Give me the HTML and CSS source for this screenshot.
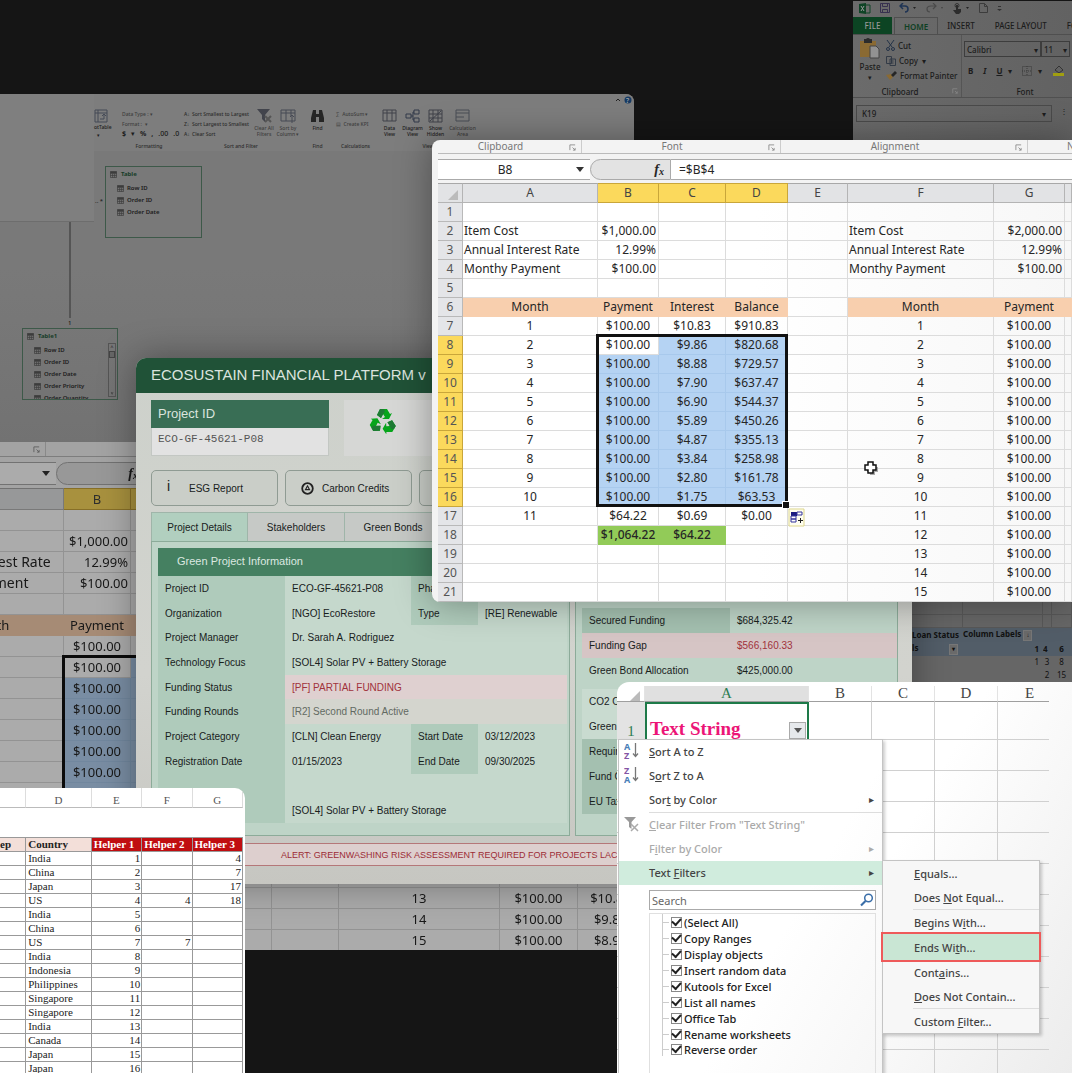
FILE: index.html
```html
<!DOCTYPE html>
<html lang="en">
<head>
<meta charset="utf-8">
<meta name="viewport" content="width=device-width, initial-scale=1">
<title>Spreadsheet collage</title>
<link rel="stylesheet" href="styles.css">
</head>
<body>
<svg width="0" height="0" class="defs" aria-hidden="true">
  <symbol id="grid" viewBox="0 0 8 8"><path d="M.5.5h7v7h-7zM.5 3h7M.5 5.2h7M3 3v4.500M5.300 3v4.500" fill="none" stroke="#3c3c3c" stroke-width=".8"/><path d="M.5.5h7v2h-7z" fill="#3c3c3c"/></symbol>
  <symbol id="launch" viewBox="0 0 8 8"><path d="M1 7V1h6M4 4l3 3M7 4.500V7H4.500" fill="none" stroke="#8a8a8a"/></symbol>
</svg>
<main class="canvas">

  <section class="win diagram">
    <div class="d-side"></div>
    <div class="d-ribbon">
      <div class="d-group g-pivot"><svg width="14" height="14" viewBox="0 0 14 14" fill="none" stroke="#454b57"><path d="M1 1h12v12H1zM1 4h12M4 1v12"/><path d="M6 10h4V6M8 7l2-2 2 2"/></svg><span>otTable</span><span>&nbsp; ▾</span></div>
      <div class="d-group g-format"><span class="mute">Data Type : ▾</span><span class="mute">Format : &nbsp;▾</span><span class="big"><b>$</b><i>▾</i><b>%</b><b>,</b><i>.00</i><i>.0</i></span><em>Formatting</em></div>
      <div class="d-group g-sort">
        <div class="d-cols"><div class="d-lines"><span><i>A↓</i>Sort Smallest to Largest</span><span><i>Z↓</i>Sort Largest to Smallest</span><span><i>A↓</i>Clear Sort</span></div>
        <div class="d-tile mute"><svg width="16" height="14" viewBox="0 0 16 14"><path d="M1 0h13L9 6v7L6 10V6z" fill="#42444c"/><path d="M9 7l6 6M15 7l-6 6" stroke="#555" stroke-width="2"/></svg>Clear All<br>Filters</div>
        <div class="d-tile mute"><svg width="16" height="14" viewBox="0 0 16 14" fill="none" stroke="#474a55"><path d="M1 1h14v11H1zM1 4h14M6 1v11M11 1v6"/><path d="M12 14V6M10 8l2-2 2 2"/></svg>Sort by<br>Column ▾</div></div>
        <em>Sort and Filter</em></div>
      <div class="d-group g-find"><div class="d-tile"><svg width="13" height="14" viewBox="0 0 13 14" fill="#252525"><path d="M2 1h3v4h3V1h3l2 8v4H8V8H5v5H0V9z"/></svg>Find</div><em>Find</em></div>
      <div class="d-group g-calc"><span class="mute">∑ &nbsp;AutoSum ▾</span><span class="mute">▤ &nbsp;Create KPI</span><em>Calculations</em></div>
      <div class="d-group g-view"><div class="d-cols">
        <div class="d-tile"><svg width="15" height="14" viewBox="0 0 15 14" fill="none" stroke="#40434b"><path d="M1 1h13v11H1zM1 4h13M5 1v11M10 1v11"/></svg>Data<br>View</div>
        <div class="d-tile"><svg width="15" height="14" viewBox="0 0 15 14" fill="none" stroke="#333b4b"><path d="M1 5h5v4H1zM9 1h5v4H9zM9 9h5v4H9zM6 7h2V3h1M8 7v4h1"/></svg>Diagram<br>View</div>
        <div class="d-tile"><svg width="15" height="14" viewBox="0 0 15 14" fill="none" stroke="#40434b"><path d="M1 1h13v12H1zM1 5h13M1 9h13M5 1v12M10 1v12M2 12L13 2"/></svg>Show<br>Hidden</div>
        <div class="d-tile wide mute"><svg width="15" height="14" viewBox="0 0 15 14" fill="none" stroke="#4b4e57"><path d="M1 1h13v11H1zM1 4h13M1 8h8"/></svg>Calculation<br>Area</div></div>
        <em>View</em></div>
      <svg class="d-help" width="18" height="8" viewBox="0 0 18 8"><path d="M1 5l2-2 2 2" fill="none" stroke="#222"/><circle cx="13" cy="4" r="3.500" fill="#173a63"/><text x="11" y="7" font-size="7" fill="#aaa">?</text></svg>
    </div>
    <div class="d-line"></div><span class="d-one">1</span><span class="d-star">.. *</span>
    <div class="node node-a"><h3><svg width="8" height="8"><use href="#grid"/></svg>Table</h3><ul>
      <li><svg width="8" height="8"><use href="#grid"/></svg>Row ID</li><li><svg width="8" height="8"><use href="#grid"/></svg>Order ID</li><li><svg width="8" height="8"><use href="#grid"/></svg>Order Date</li></ul></div>
    <div class="node node-b"><h3><svg width="8" height="8"><use href="#grid"/></svg>Table1</h3><ul>
      <li><svg width="8" height="8"><use href="#grid"/></svg>Row ID</li><li><svg width="8" height="8"><use href="#grid"/></svg>Order ID</li><li><svg width="8" height="8"><use href="#grid"/></svg>Order Date</li><li><svg width="8" height="8"><use href="#grid"/></svg>Order Priority</li><li><svg width="8" height="8"><use href="#grid"/></svg>Order Quantity</li></ul>
      <div class="scroll"><i>^</i><b></b><i class="down">^</i></div></div>
  </section>

  <section class="win ribbon">
    <div class="r-quick">
      <svg width="12" height="11" viewBox="0 0 12 11"><path d="M0 1l7-1v11l-7-1z" fill="#0f4426"/><path d="M7 2h4v8H7" fill="none" stroke="#0f4426"/><path d="M2 3l3 5M5 3L2 8" stroke="#999"/></svg>
      <svg width="10" height="10" viewBox="0 0 10 10" fill="none" stroke="#37304f"><path d="M.5.5h9v9h-9zM2.500.5v3h5v-3M2.500 9.500v-3h5v3"/></svg>
      <svg width="18" height="10" viewBox="0 0 18 10" fill="none" stroke="#1f3454" stroke-width="1.500"><path d="M4 0L1 3l3 3M1 3h5q3 0 3 3t-3 3"/><path d="M14 4h3l-1.500 2z" stroke="none" fill="#222"/></svg>
      <svg width="18" height="10" viewBox="0 0 18 10" fill="none" stroke="#4a4a4a" stroke-width="1.200"><path d="M7 0l3 3-3 3M10 3H5Q1 3 1 6t3 3"/><path d="M15 4h2l-1 2z" stroke="none" fill="#444"/></svg>
      <svg width="17" height="11" viewBox="0 0 17 11"><circle cx="4" cy="2.500" r="2" fill="none" stroke="#333"/><path d="M3 2h2v4h3v3l-2 2H3L0 7h3z" fill="#2c2c2c"/><path d="M13 4h3l-1.500 2z" fill="#222"/></svg>
      <svg width="9" height="10" viewBox="0 0 9 10" fill="none" stroke="#3c3c3c"><path d="M.5.5h5l3 3v6h-8zM5.500.5v3h3"/></svg>
      <svg width="5" height="10" viewBox="0 0 5 10" fill="#333"><path d="M1 3h3v1H1zM0 6h5L2.500 8z"/></svg>
    </div>
    <nav class="r-tabs"><button class="file">FILE</button><button class="home">HOME</button><button>INSERT</button><button>PAGE LAYOUT</button><button>FORMULAS</button></nav>
    <div class="r-body">
      <div class="r-clip">
        <div class="r-paste"><svg width="20" height="21" viewBox="0 0 20 21"><path d="M0 3h16v16H0z" fill="#8a6a33"/><path d="M4 1h2q2-2 4 0h2v4H4z" fill="#2b2b2b"/><path d="M10 8h6l3 3v9h-9z" fill="#929292" stroke="#444"/></svg>Paste<small>▾</small></div>
        <div class="r-list"><span><svg width="9" height="11" viewBox="0 0 9 11" fill="none" stroke="#243348"><path d="M1 0l5 7M8 0L3 7"/><circle cx="2" cy="9" r="1.500"/><circle cx="7" cy="9" r="1.500"/></svg>Cut</span>
        <span><svg width="10" height="10" viewBox="0 0 10 10" fill="none" stroke="#333b46"><path d="M.5.500h5v7h-5zM4 3h5.500v6.500H4zM5.500 5h2M5.500 7h2"/></svg>Copy &nbsp;▾</span>
        <span><svg width="11" height="9" viewBox="0 0 11 9"><path d="M0 4l5-1 2 3-3 3z" fill="#8a6a33"/><path d="M5 4l4-4 2 2-4 4z" fill="#262626"/></svg>Format Painter</span></div>
        <em>Clipboard</em><svg class="r-launch" width="6" height="6"><use href="#launch"/></svg>
      </div>
      <div class="r-font">
        <div class="r-selects"><button class="r-face">Calibri<i>▾</i></button><button class="r-size">11<i>▾</i></button></div>
        <div class="r-fmt"><b>B</b><b class="it">I</b><b class="un">U</b><i>▾</i><svg width="10" height="10" viewBox="0 0 10 10" fill="none" stroke="#3a3a3a" stroke-dasharray="1 1"><path d="M.5.500h9v9h-9zM5 0v10M0 5h10"/></svg><i>▾</i><svg width="13" height="11" viewBox="0 0 13 11"><path d="M3 5l4-4 4 4-4 3z" fill="none" stroke="#333"/><path d="M1 8h11v3H1z" fill="#a19f10"/></svg></div>
        <em>Font</em>
      </div>
    </div>
    <div class="r-name"><div>K19<i>▾</i></div><span>⋮</span></div>
  </section>

  <section class="win sheet back" id="back"></section>

  <section class="win pivot">
    <table>
      <colgroup><col class="p1"><col class="p2"><col class="p3"><col class="p4"><col></colgroup>
      <tr><td></td><td></td><td></td><td></td><td></td></tr>
      <tr><td></td><td></td><td></td><td></td><td></td></tr>
      <tr class="blue"><th>Loan Status</th><th colspan="4">Column Labels <i>↓</i></th></tr>
      <tr class="blue"><th>ls <i class="far">▾</i></th><th class="r">1</th><th>4</th><th class="c">6</th><th></th></tr>
      <tr class="plain"><td></td><td class="r">1</td><td>3</td><td>8</td><td></td></tr>
      <tr class="plain"><td></td><td></td><td>2</td><td>15</td><td>1</td></tr>
    </table>
  </section>

  <section class="win eco">
    <h1>ECOSUSTAIN FINANCIAL PLATFORM v</h1>
    <div class="e-body">
      <div class="e-top">
        <div class="e-id"><label for="pid">Project ID</label><input id="pid" value="ECO-GF-45621-P08"></div>
        <div class="e-logo"><svg width="28" height="28" viewBox="0 0 28 28">
          <g id="arm"><path d="M8 8L11 2H18L21 7 23 6 20 12H13L16 10 14 7 12 11z" fill="#07a51b"/><path d="M8 8l3-6h3.500L16 4l-4 7z" fill="#1e7a34"/></g>
          <use href="#arm" transform="rotate(120 14 15)"/><use href="#arm" transform="rotate(240 14 15)"/></svg></div>
      </div>
      <div class="e-buttons">
        <button><span class="ico">i</span>ESG Report</button>
        <button><svg class="ico" width="13" height="13" viewBox="0 0 13 13"><circle cx="6.500" cy="6.500" r="5.300" fill="none" stroke="#222" stroke-width="1.800"/><path d="M6.500 2.800l3 5.500h-6z" fill="#222"/><path d="M6.500 5l1 2h-2z" fill="#ccc"/></svg>Carbon Credits</button>
        <button></button>
      </div>
      <nav class="e-tabs"><button class="on">Project Details</button><button>Stakeholders</button><button>Green Bonds</button></nav>
      <div class="e-panels">
        <div class="e-panel e-left">
          <h2>Green Project Information</h2>
          <table>
            <colgroup><col class="c1"><col class="c2"><col class="c3"><col></colgroup>
            <tr><th>Project ID</th><td>ECO-GF-45621-P08</td><th>Phase</th><td></td></tr>
            <tr><th>Organization</th><td>[NGO] EcoRestore</td><th>Type</th><td>[RE] Renewable</td></tr>
            <tr><th>Project Manager</th><td colspan="3">Dr. Sarah A. Rodriguez</td></tr>
            <tr><th>Technology Focus</th><td colspan="3">[SOL4] Solar PV + Battery Storage</td></tr>
            <tr><th>Funding Status</th><td colspan="3" class="bad">[PF] PARTIAL FUNDING</td></tr>
            <tr><th>Funding Rounds</th><td colspan="3" class="soft">[R2] Second Round Active</td></tr>
            <tr><th>Project Category</th><td>[CLN] Clean Energy</td><th>Start Date</th><td>03/12/2023</td></tr>
            <tr><th>Registration Date</th><td>01/15/2023</td><th>End Date</th><td>09/30/2025</td></tr>
            <tr><th></th><td colspan="3"></td></tr>
            <tr><th></th><td colspan="3">[SOL4] Solar PV + Battery Storage</td></tr>
          </table>
        </div>
        <div class="e-panel e-right">
          <dl><div class="dark"><dt>Secured Funding</dt><dd>$684,325.42</dd></div>
          <div class="bad"><dt>Funding Gap</dt><dd>$566,160.33</dd></div>
          <div><dt>Green Bond Allocation</dt><dd>$425,000.00</dd></div></dl>
          <dl><div class="light"><dt>CO2 Offset</dt></div><div class="light"><dt>Green Score</dt></div>
          <div class="dark"><dt>Required</dt></div><div class="dark"><dt>Fund Code</dt></div><div class="dark"><dt>EU Taxonomy</dt></div></dl>
        </div>
      </div>
      <p class="e-alert">ALERT: GREENWASHING RISK ASSESSMENT REQUIRED FOR PROJECTS LACKING DATA</p>
    </div>
  </section>

  <section class="win sheet front" id="front"></section>

  <section class="win filter">
    <table class="f-grid">
      <colgroup><col class="f0"><col class="fa"><col class="fb"><col class="fb"><col class="fb"><col></colgroup>
      <thead><tr><th><i class="corner"></i></th><th class="sel">A</th><th>B</th><th>C</th><th>D</th><th class="last">E</th></tr></thead>
      <tbody id="fgrid"><tr class="first"><th>1</th><td class="text"><span>Text String</span><button aria-label="Filter"><svg width="8" height="5" viewBox="0 0 8 5"><path d="M0 0h8L4 5z" fill="#555"/></svg></button></td><td></td><td></td><td></td><td></td></tr></tbody>
    </table>
    <div class="menu">
      <button><svg width="16" height="18" viewBox="0 0 16 18"><text x="0" y="8" class="ia">A</text><text x="0" y="17" class="iz">Z</text><path d="M11.500 1v13M9 11.500l2.500 3 2.500-3" fill="none" stroke="#777" stroke-width="1.300"/></svg><span><u>S</u>ort A to Z</span></button>
      <button><svg width="16" height="18" viewBox="0 0 16 18"><text x="0" y="8" class="iz">Z</text><text x="0" y="17" class="ia">A</text><path d="M11.500 1v13M9 11.500l2.500 3 2.500-3" fill="none" stroke="#777" stroke-width="1.300"/></svg><span>S<u>o</u>rt Z to A</span></button>
      <button><i></i><span>Sor<u>t</u> by Color</span><b>▸</b></button>
      <hr>
      <button disabled><svg width="16" height="16" viewBox="0 0 16 16"><path d="M0 1h12L7.500 6v7L5 11V6z" fill="#999"/><path d="M7 8l7 7M14 8l-7 7" stroke="#aaa" stroke-width="1.500"/></svg><span><u>C</u>lear Filter From "Text String"</span></button>
      <button disabled><i></i><span>F<u>i</u>lter by Color</span><b>▸</b></button>
      <button class="hot"><i></i><span>Text <u>F</u>ilters</span><b>▸</b></button>
      <div class="search"><input aria-label="Search" placeholder="Search"><svg width="14" height="14" viewBox="0 0 14 14" fill="none" stroke="#3a6ea8"><circle cx="8.500" cy="5" r="3.800" stroke-width="1.500"/><path d="M5.500 8L1 12.500" stroke-width="2.200"/></svg></div>
      <div class="checks">
        <label><input type="checkbox" checked>(Select All)</label>
        <label><input type="checkbox" checked>Copy Ranges</label>
        <label><input type="checkbox" checked>Display objects</label>
        <label><input type="checkbox" checked>Insert random data</label>
        <label><input type="checkbox" checked>Kutools for Excel</label>
        <label><input type="checkbox" checked>List all names</label>
        <label><input type="checkbox" checked>Office Tab</label>
        <label><input type="checkbox" checked>Rename worksheets</label>
        <label><input type="checkbox" checked>Reverse order</label>
      </div>
    </div>
    <div class="submenu">
      <button><u>E</u>quals...</button><button>Does <u>N</u>ot Equal...</button><hr>
      <button>Begins W<u>i</u>th...</button><button class="hot">Ends Wi<u>t</u>h...</button>
      <button>Cont<u>a</u>ins...</button><button><u>D</u>oes Not Contain...</button><hr>
      <button>Custom <u>F</u>ilter...</button>
    </div>
  </section>

  <section class="win helper">
    <table>
      <colgroup><col class="h0"><col class="h1"><col class="h2"><col class="h2"><col class="h2"></colgroup>
      <thead><tr class="letters"><th></th><th>D</th><th>E</th><th>F</th><th>G</th></tr></thead>
      <tbody id="helper"><tr class="blank"><td colspan="5"></td></tr>
      <tr class="head"><th>ep</th><th>Country</th><th class="red">Helper 1</th><th class="red">Helper 2</th><th class="red">Helper 3</th></tr></tbody>
    </table>
  </section>
</main>
<script src="script.js"></script>
</body>
</html>
```
FILE: styles.css
```css
* { box-sizing: border-box; }
body { margin: 0; background: #151515; font-family: "Noto Sans", sans-serif; }
button { font: inherit; color: inherit; background: none; border: 0; padding: 0; margin: 0; }
table { border-collapse: separate; border-spacing: 0; table-layout: fixed; width: 100%; }
td, th { padding: 0; font-weight: 400; white-space: nowrap; }
i, em { font-style: normal; }
.defs { position: absolute; }
.canvas { position: relative; height: 100vh; min-height: 1073px; overflow: hidden; }
.win { position: absolute; overflow: hidden; }

/* data model diagram */
.diagram { left: 0; top: 94px; width: 634px; height: 350px; background: linear-gradient(#797979 0%, #797979 50%, #727272 100%); border-radius: 0 8px 0 0; font-size: 5px; font-weight: 500; color: #1c1c1c; }
.d-side { position: absolute; left: 0; top: 0; width: 94px; height: 128px; background: #7f7f7f; border-bottom: 1px solid #6d6d6d; }
.d-ribbon { margin-left: 94px; height: 57px; background: #7d7d7d; display: flex; padding-top: 15px; position: relative; }
.d-group { position: relative; display: flex; flex-direction: column; padding: 0 4px; line-height: 10px; white-space: nowrap; }
.d-group em { position: absolute; bottom: 0; left: 0; right: 0; text-align: center; color: #2c2c2c; }
.g-pivot { width: 24px; padding: 0; line-height: 7px; gap: 1px; }
.g-format { width: 62px; }
.g-format .big { font-size: 7px; display: flex; gap: 5px; }
.g-sort { width: 122px; }
.g-find { width: 31px; align-items: center; }
.g-calc { width: 45px; padding: 0 0 0 3px; }
.g-view { width: 100px; padding: 0; }
.mute { color: #3e3e3e; }
.d-cols { display: flex; }
.d-lines { display: flex; flex-direction: column; width: 68px; flex: none; color: #2c2c2c; }
.d-lines i { display: inline-block; width: 8px; }
.d-tile { flex: 1 0 22px; display: flex; flex-direction: column; align-items: center; text-align: center; line-height: 6px; gap: 2px; }
.g-sort .d-tile { flex-basis: 24px; }
.d-tile.wide { flex-basis: 30px; }
.d-help { position: absolute; right: 1px; top: 2px; }
.d-line { position: absolute; left: 69px; top: 128px; width: 2px; height: 96px; background: #555; }
.d-one { position: absolute; left: 68px; top: 225px; font-size: 6px; }
.d-star { position: absolute; left: 95px; top: 103px; font-size: 6px; }
.node { position: absolute; width: 97px; height: 72px; border: 1px solid #3d5949; overflow: hidden; padding: 1px 4px; }
.node-a { left: 105px; top: 72px; }
.node-b { left: 22px; top: 234px; width: 96px; }
.node h3 { margin: 0; font-size: 6px; line-height: 12px; color: #173c28; display: flex; gap: 4px; align-items: center; }
.node ul { list-style: none; margin: 2px 0 0; padding: 0 0 0 7px; font-size: 6px; font-weight: 600; }
.node li { display: flex; gap: 3px; align-items: center; line-height: 12px; height: 12px; }
.node svg { width: 7px; height: 7px; }
.scroll { position: absolute; right: 1px; top: 14px; bottom: 2px; width: 8px; border: 1px solid #555; text-align: center; line-height: 7px; display: flex; flex-direction: column; }
.scroll b { height: 7px; background: #666; border: 1px solid #444; }
.scroll .down { margin-top: auto; transform: rotate(180deg); }

/* dark ribbon */
.ribbon { left: 853px; right: 0; top: 1px; height: 145px; background: linear-gradient(90deg, #6b6b6b, #626262); font-size: 8px; font-weight: 500; color: #1c1c1c; }
.r-quick { height: 16px; display: flex; gap: 9px; padding: 2px 6px; align-items: flex-start; }
.r-tabs { display: flex; height: 18px; border-bottom: 1px solid #4f4f4f; gap: 20px; font-size: 8px; white-space: nowrap; }
.r-tabs .file { background: #0c4423; color: #999; width: 39px; flex: none; }
.r-tabs .home { color: #0f4023; border: 1px solid #4f4f4f; border-bottom: 0; padding: 0 9px; margin: 0 -11px 0 -18px; font-weight: 600; }
.r-body { display: flex; height: 63px; border-bottom: 1px solid #505050; }
.r-clip { position: relative; width: 109px; flex: none; border-right: 1px solid #555; padding: 3px 0 0 7px; display: flex; gap: 6px; }
.r-paste { display: flex; flex-direction: column; align-items: center; line-height: 12px; width: 20px; gap: 2px; }
.r-paste small { line-height: 5px; }
.r-list span { display: flex; gap: 3px; align-items: center; height: 15px; white-space: nowrap; }
.r-clip em, .r-font em { position: absolute; left: 0; right: 14px; bottom: 0; text-align: center; }
.r-font em { right: -16px; }
.r-launch { position: absolute; right: 3px; bottom: 3px; }
.r-font { position: relative; flex: 1; padding: 6px 0 0 2px; }
.r-selects { display: flex; }
.r-selects button { border: 1px solid #3d3d3d; height: 16px; text-align: left; padding: 0 2px; display: flex; align-items: center; justify-content: space-between; }
.r-face { width: 77px; }
.r-size { width: 29px; }
.r-fmt { display: flex; gap: 10px; padding: 3px 0 0 4px; align-items: center; height: 24px; white-space: nowrap; }
.r-fmt .it { font-style: italic; }
.r-fmt .un { text-decoration: underline; }
.r-fmt i { margin-left: -4px; }
.r-name { display: flex; gap: 8px; padding: 7px 3px; }
.r-name div { width: 196px; height: 17px; border: 1px solid #4a4a4a; padding: 0 5px; display: flex; justify-content: space-between; align-items: center; }

/* spreadsheets */
.sheet { background: #f3f3f3; color: #262626; }
.front { left: 432px; right: 0; top: 140px; height: 462px; padding-left: 6px; border-radius: 8px 0 0 8px; --row: 19px; --strip: 14px; --bar: 29px; --text: 12px; --label: 12px; box-shadow: 0 0 36px rgba(0, 0, 0, .35); }
.back { left: -117px; width: 761px; top: 442px; height: 508px; padding-left: 5px; --row: 21px; --strip: 15px; --bar: 31px; --text: 13px; --label: 14px; filter: brightness(.67); }
.s-strip { display: flex; height: var(--strip); font-size: 10px; line-height: 12px; color: #777; border-bottom: 1px solid #bbb; }
.s-strip div { position: relative; border-right: 1px solid #ccc; text-align: center; padding-right: 18px; flex: none; overflow: hidden; }
.s-strip svg { position: absolute; right: 5px; top: 4px; width: 7px; height: 7px; }
.s-bar { display: flex; height: var(--bar); padding: 5px 0 3px; font-size: var(--text); align-items: stretch; }
.s-bar > div { background: #fff; border: 1px solid #aaa; border-width: 1px 0; display: flex; align-items: center; }
.s-bar .name { flex: none; justify-content: center; position: relative; padding-right: 18px; }
.s-bar .name b { position: absolute; right: 6px; border: 4px solid transparent; border-top: 5px solid #333; border-bottom: 0; }
.s-bar .fx { flex: none; background: #e3e3e3; border: 1px solid #aaa; border-radius: 12px 0 0 12px; justify-content: flex-end; padding-right: 6px; font: italic bold 14px "Liberation Serif", serif; }
.s-bar .fx small { font-size: 10px; padding-top: 3px; }
.s-bar .formula { flex: 1; padding-left: 8px; }
.s-grid { position: relative; background: #fff; }
.front .s-grid { background: linear-gradient(90deg, #fff 50%, #f7f7f7); }
.s-grid td, .s-grid th { height: var(--row); line-height: calc(var(--row) - 1px); font-size: var(--text); border-right: 1px solid #dcdcdc; border-bottom: 1px solid #dcdcdc; text-align: center; overflow: hidden; }
.s-grid thead th { background: #e2e3e5; border-color: #b4b4b4; height: calc(var(--row) + 1px); color: #444; border-top: 1px solid #a8a8a8; }
.s-grid tbody th { background: #e4e5e8; border-color: #b9b9b9; color: #555; }
.s-grid thead th.on, .s-grid tbody th.on { background: #fbd95c; border-color: #c9a63a; }
.s-grid .label { text-align: left; padding-left: 1px; font-size: var(--label); }
.s-grid .num { text-align: right; padding-right: 2px; }
.s-grid .peach { background: #f8cfae; border-color: #f8cfae; }
.s-grid .pick { background: #b5d3f3; border-color: #a8c9ec; }
.s-grid .sum { background: #92cb58; border-color: #92cb58; font-weight: 500; }
.corner { display: block; width: 0; height: 0; border: 5px solid #bbb; border-top-color: transparent; border-left-color: transparent; margin: 4px 4px 0 auto; }
.frame { position: absolute; border: 3px solid #111; }
.back .frame { left: 174px; top: 167px; width: 211px; height: 192px; }
.front .frame { left: 158px; top: 151px; width: 192px; height: 173px; }
.front .frame::after { content: ""; position: absolute; right: -4px; bottom: -4px; width: 6px; height: 6px; background: #111; border: 1px solid #fff; border-width: 1px 0 0 1px; }
.paste-tag { position: absolute; left: 350px; top: 325px; }
.cursor { position: absolute; left: 425px; top: 277px; }

/* pivot excerpt */
.pivot { left: 912px; right: 0; top: 602px; height: 90px; background: #666; color: #111; }
.pivot td, .pivot th { height: 13px; font-size: 8px; line-height: 12px; border-right: 1px solid #585858; border-bottom: 1px solid #585858; text-align: center; overflow: hidden; }
.pivot .blue th { font-weight: 700; text-align: left; border-color: transparent; background: #525d68; }
.pivot .plain td { border-color: transparent; }
.pivot .r, .pivot .blue .r { text-align: right; padding-right: 3px; }
.pivot .blue .c { text-align: center; }
.pivot th i { border: 1px solid #777; background: #6a6a6a; padding: 0 2px; line-height: 9px; display: inline-block; font-size: 6px; }
.pivot th .far { margin-left: 29px; }
.p1 { width: 51px; } .p2 { width: 80px; } .p3 { width: 9px; } .p4 { width: 20px; }

/* eco platform */
.eco { left: 136px; top: 358px; width: 776px; height: 526px; background: linear-gradient(#cdd1cb, #d2d3ce 60%, #c6c6c1); border-radius: 10px 8px 0 0; font-family: "Liberation Sans", Arial, sans-serif; font-size: 10px; color: #18211c; box-shadow: 0 0 36px rgba(0, 0, 0, .35); }
.eco h1 { margin: 0; height: 35px; line-height: 34px; padding-left: 15px; background: #205237; color: #dbe4de; font-size: 15px; font-weight: 400; }
.e-body { padding: 7px 14px 0 15px; }
.e-top { display: flex; gap: 15px; height: 56px; }
.e-id { width: 178px; display: flex; flex-direction: column; }
.e-id label { height: 28px; line-height: 28px; padding-left: 7px; background: #396e55; color: #dbe4de; font-size: 13px; }
.e-id input { height: 28px; width: 100%; border: 1px solid #c3c7c3; border-top: 0; background: #e2e2e2; padding: 0 6px 6px; font: 11px "Liberation Mono", monospace; color: #555; }
.e-logo { flex: 1; background: #d6d7d5; padding: 7px 25px; }
.e-buttons { display: flex; gap: 7px; margin-top: 14px; height: 36px; }
.e-buttons button { width: 127px; flex: none; border: 1px solid #8f9b93; border-radius: 5px; text-align: left; display: flex; align-items: center; background: #cacec8; }
.ico { width: 13px; margin: 0 8px 0 15px; flex: none; }
span.ico { margin: 0 9px 4px 15px; font-size: 14px; }
.e-tabs { display: flex; margin-top: 6px; height: 30px; }
.e-tabs button { width: 97px; border: 1px solid #9fb5a9; border-left: 0; background: #c6c9c6; }
.e-tabs .on { background: #b1cfbf; border-left: 1px solid #9fb5a9; border-bottom-color: #b1cfbf; }
.e-panels { display: flex; gap: 5px; height: 295px; margin-top: -1px; }
.e-panel { border: 1px solid #8cab99; background: #bed4c7; }
.e-left { width: 419px; padding: 6px 2px 0 6px; }
.e-right { flex: 1; padding: 66px 0 0 6px; }
.e-panel h2 { margin: 0; height: 28px; line-height: 27px; padding-left: 19px; background: #458061; color: #dce8e0; font-size: 11px; font-weight: 400; }
.e-left table { height: 247px; }
.e-left tr { height: 10%; }
.e-left td, .e-left th { text-align: left; padding-left: 7px; background: #c5d8cc; }
.e-left th { background: #afcbbb; }
.e-left .bad { background: #dfd0d0; color: #a1323c; }
.e-left .soft { background: #d4d5ce; color: #626a62; }
.c1 { width: 127px; } .c2 { width: 126px; } .c3 { width: 67px; }
dl { margin: 0 0 6px; }
dl div { display: flex; height: 25px; line-height: 25px; }
dt { width: 148px; padding-left: 7px; }
dd { margin: 0; padding-left: 7px; }
.dark dt { background: #a4c0b0; }
.light { background: #c9dbd0; }
dl .bad { background: #d6c5c5; }
dl .bad dd { color: #a1323c; }
.e-alert { margin: 7px 0 0; height: 23px; line-height: 22px; border: 1px solid #b57779; background: #ddcfce; color: #9c2c35; font-size: 9px; padding-left: 129px; white-space: nowrap; overflow: hidden; }

/* filter menu */
.filter { left: 617px; right: 0; top: 682px; height: 391px; border-radius: 12px 0 0 0; background: linear-gradient(120deg, #fff 55%, #ececec); color: #444; font-size: 11px; font-weight: 500; padding-right: 23px; padding-top: 4px; }
.f-grid { font-family: "Liberation Serif", serif; }
.f0 { width: 28px; } .fa { width: 164px; } .fb { width: 63px; }
.f-grid thead th { height: 16px; line-height: 13px; font-size: 15px; border-right: 1px solid #e3e3e3; border-bottom: 1px solid #9f9f9f; }
.f-grid thead .sel { background: #e0e0e0; color: #2d7d52; }
.f-grid td { height: 31px; border-right: 1px solid #d0d0d0; border-bottom: 1px solid #d0d0d0; }
.f-grid td:last-child, .f-grid thead .last { border-right: 0; }
.f-grid thead .last { padding-left: 12px; }
.f-grid .first td { height: 38px; }
.f-grid .first th { background: #e3e3e3; color: #2d7d52; vertical-align: bottom; font-size: 15px; line-height: 18px; }
.f-grid .text { border: 2px solid #1e7a49; border-bottom: 0; color: #ec1577; font-size: 19px; font-weight: 700; vertical-align: bottom; line-height: 20px; padding: 0 0 1px 3px; position: relative; }
.f-grid .text button { position: absolute; right: 1px; bottom: 1px; width: 17px; height: 17px; background: #e6e9ec; border: 1px solid #aaa; display: grid; place-items: center; }
.menu { position: absolute; left: 1px; top: 57px; width: 265px; height: 340px; background: linear-gradient(120deg, #fff 60%, #f6f6f6); border: 1px solid #c4c4c4; box-shadow: 2px 2px 3px rgba(0, 0, 0, .2); }
.menu > button { display: flex; width: 100%; height: 24px; align-items: center; padding: 0 8px 2px 5px; text-align: left; }
.menu > button > :first-child { width: 16px; margin-right: 9px; flex: none; }
.menu > button b { margin-left: auto; font: 10px "DejaVu Sans", sans-serif; }
.menu > button:disabled { color: #aaa; }
.menu .hot { background: #d0ecdd; }
.ia, .iz { font: bold 9px "Noto Sans", sans-serif; fill: #4a7fb8; }
.iz { fill: #8355a5; }
hr { border: 0; border-top: 1px solid #ddd; margin: 0 0 0 30px; }
.search { position: relative; margin: 5px 6px 0 30px; }
.search input { width: 100%; height: 20px; border: 1px solid #aaa; background: #fff; font: 11px "Noto Sans", sans-serif; padding: 0 2px; display: block; }
.search input::placeholder { color: #666; }
.search svg { position: absolute; right: 2px; top: 3px; }
.checks { margin: 3px 6px 0 30px; border: 1px solid #e0e0e0; border-bottom: 0; height: 180px; padding: 0 0 0 12px; color: #222; }
.checks label { display: flex; align-items: center; height: 16px; gap: 2px; border-left: 1px solid #ccc; }
.checks label:last-child { height: 14px; }
.checks label::before { content: ""; width: 6px; border-top: 1px solid #ccc; }
.checks input { appearance: none; margin: 0; width: 11px; height: 11px; border: 1px solid #888; background: #fff; display: grid; place-items: center; }
.checks input:checked::after { content: ""; width: 7px; height: 4px; border: 2px solid #222; border-top: 0; border-right: 0; rotate: -48deg; margin-bottom: 2px; }
.submenu { position: absolute; left: 265px; top: 178px; width: 158px; background: #f7f7f7; border: 1px solid #c4c4c4; box-shadow: 2px 2px 3px rgba(0, 0, 0, .2); }
.submenu button { display: block; width: 100%; text-align: left; padding-left: 31px; height: 24px; }
.submenu .hot { background: #c9e6d4; outline: 2px solid #ee5a5a; height: 26px; }

/* helper columns */
.helper { left: 0; width: 245px; top: 788px; height: 285px; background: #fff; border-radius: 0 10px 0 0; font: 11px "Liberation Serif", serif; color: #222; }
.helper table { width: 243px; }
.h0 { width: 26px; } .h1 { width: 65px; } .h2 { width: 50px; }
.helper .letters th { height: 20px; padding-top: 4px; border-right: 1px solid #ddd; border-bottom: 1px solid #bbb; color: #555; }
.helper .blank td { height: 30px; border: 0; border-bottom: 1px solid #999; }
.helper td { height: 14px; line-height: 13px; border-right: 1px solid #999; border-bottom: 1px solid #999; text-align: right; padding-right: 1px; }
.helper td:nth-child(2) { text-align: left; padding-left: 2px; }
.helper .head th { height: 14px; line-height: 13px; font-weight: 700; background: #f3dfd9; border-right: 1px solid #999; border-bottom: 1px solid #999; text-align: left; padding-left: 2px; }
.helper .head th:first-child { padding-left: 0; }
.helper .head .red { background: #c00d10; color: #fff; }
```
FILE: script.js
```js
const front = {
  cols: [25, 135, 61, 67, 62, 60, 146, 71], strip: [144, 199, 247, 136], name: 152, fx: 81,
  letters: ['A', 'B', 'C', 'D', 'E', 'F', 'G', ''], rows: {}
};
const back = {
  cols: [27, 149, 67, 74, 67, 67, 161, 78], strip: [158, 219, 272, 130], name: 168, fx: 89,
  letters: ['', 'B', '', '', '', '', '', ''], rows: {}
};
const interest = ['10.83', '9.86', '8.88', '7.90', '6.90', '5.89', '4.87', '3.84', '2.80', '1.75', '0.69'];
const balance = ['910.83', '820.68', '729.57', '637.47', '544.37', '450.26', '355.13', '258.98', '161.78', '63.53', '0.00'];

front.rows[2] = ['Item Cost', '$1,000.00', '', '', '', 'Item Cost', '$2,000.00', ''];
front.rows[3] = ['Annual Interest Rate', '12.99%', '', '', '', 'Annual Interest Rate', '12.99%', ''];
front.rows[4] = ['Monthy Payment', '$100.00', '', '', '', 'Monthy Payment', '$100.00', ''];
front.rows[6] = ['Month', 'Payment', 'Interest', 'Balance', '', 'Month', 'Payment', ''];
for (let n = 1; n <= 15; n++) {
  const left = n <= 11 ? [n, n === 11 ? '$64.22' : '$100.00', '$' + interest[n - 1], '$' + balance[n - 1]] : ['', '', '', ''];
  front.rows[n + 6] = [...left, '', n, '$100.00', ''];
}
front.rows[18].splice(1, 2, '$1,064.22', '$64.22');

for (const r of [3, 4, 6]) back.rows[r] = front.rows[r].slice(0, 2);
back.rows[2] = ['', '$1,000.00'];
for (let r = 7; r <= 13; r++) back.rows[r] = ['', '$100.00'];
back.rows[19] = ['', '', '', '', '', 13, '$100.00', '$10.83'];
back.rows[20] = ['', '', '', '', '', 14, '$100.00', '$9.86'];
back.rows[21] = ['', '', '', '', '', 15, '$100.00', '$8.95'];

function cellClass(r, c) {
  if (r >= 2 && r <= 4) return c === 0 || c === 5 ? 'label' : 'num';
  if (r === 6 && c !== 4) return 'peach';
  if (r >= 8 && r <= 16 && c >= 1 && c <= 3 && !(r === 8 && c === 1)) return 'pick';
  if (r === 18 && (c === 1 || c === 2)) return 'sum';
  return '';
}

function draw(id, s) {
  const launch = '<svg><use href="#launch"/></svg>';
  const strip = ['Clipboard', 'Font', 'Alignment', 'Number']
    .map((t, i) => `<div style="width:${s.strip[i]}px">${t}${launch}</div>`).join('');
  let body = '';
  for (let r = 1; r <= 21; r++) {
    const row = s.rows[r] || [];
    body += `<tr><th class="${r >= 8 && r <= 16 ? 'on' : ''}">${r}</th>` +
      s.letters.map((_, c) => `<td class="${cellClass(r, c)}">${row[c] ?? ''}</td>`).join('') + '</tr>';
  }
  const extras = id === 'front'
    ? '<svg class="paste-tag" width="18" height="19" viewBox="0 0 18 19"><path d="M1 1h15v17H1z" fill="#fffef0" stroke="#ddd68a"/><path d="M3 4h6v4H3z" fill="#1b1b80"/><path d="M9 4h5v3H9zM3 8h5v3H3zM3 11h5v3H3z" fill="#fff" stroke="#33339a"/><path d="M12.500 10v5M10 12.500h5" stroke="#222"/></svg>' +
      '<svg class="cursor" width="18" height="18" viewBox="0 0 18 18"><path d="M7 4h5v3h3v5h-3v3H7v-3H4V7h3z" fill="#888" opacity=".7"/><path d="M5 2h5v3h3v5h-3v3H5v-3H2V5h3z" fill="#fff" stroke="#111" stroke-width="1.500"/></svg>'
    : '';
  document.getElementById(id).innerHTML =
    `<div class="s-strip">${strip}</div>
     <div class="s-bar"><div class="name" style="width:${s.name}px">B8<b></b></div>
     <div class="fx" style="width:${s.fx}px">f<small>x</small></div><div class="formula">=$B$4</div></div>
     <div class="s-grid"><table><colgroup>${s.cols.map(w => `<col style="width:${w}px">`).join('')}<col></colgroup>
     <thead><tr><th><i class="corner"></i></th>${s.letters.map((l, c) => `<th class="${c > 0 && c < 4 ? 'on' : ''}">${l}</th>`).join('')}</tr></thead>
     <tbody>${body}</tbody></table><div class="frame"></div>${extras}</div>`;
}
draw('front', front);
draw('back', back);

document.getElementById('fgrid').insertAdjacentHTML('beforeend',
  '<tr><td></td><td></td><td></td><td></td><td></td><td></td></tr>'.repeat(11));

const people = [['India', 1, '', 4], ['China', 2, '', 7], ['Japan', 3, '', 17], ['US', 4, 4, 18], ['India', 5], ['China', 6],
  ['US', 7, 7], ['India', 8], ['Indonesia', 9], ['Philippines', 10], ['Singapore', 11], ['Singapore', 12],
  ['India', 13], ['Canada', 14], ['Japan', 15], ['Japan', 16]];
document.getElementById('helper').insertAdjacentHTML('beforeend', people.map(p =>
  `<tr><td></td><td>${p[0]}</td><td>${p[1]}</td><td>${p[2] ?? ''}</td><td>${p[3] ?? ''}</td></tr>`).join(''));
```
